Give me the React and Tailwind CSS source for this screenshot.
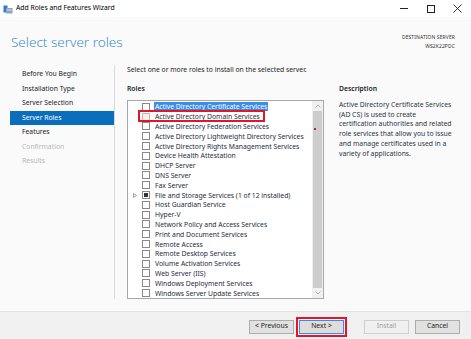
import React from 'react';

const navItems = [
    { label: 'Before You Begin' },
    { label: 'Installation Type' },
    { label: 'Server Selection' },
    { label: 'Server Roles', active: true },
    { label: 'Features' },
    { label: 'Confirmation', disabled: true },
    { label: 'Results', disabled: true },
];

const roles = [
    'Active Directory Certificate Services',
    'Active Directory Domain Services',
    'Active Directory Federation Services',
    'Active Directory Lightweight Directory Services',
    'Active Directory Rights Management Services',
    'Device Health Attestation',
    'DHCP Server',
    'DNS Server',
    'Fax Server',
    'File and Storage Services (1 of 12 installed)',
    'Host Guardian Service',
    'Hyper-V',
    'Network Policy and Access Services',
    'Print and Document Services',
    'Remote Access',
    'Remote Desktop Services',
    'Volume Activation Services',
    'Web Server (IIS)',
    'Windows Deployment Services',
    'Windows Server Update Services',
];

const descLines = [
    'Active Directory Certificate Services',
    '(AD CS) is used to create',
    'certification authorities and related',
    'role services that allow you to issue',
    'and manage certificates used in a',
    'variety of applications.',
];

const WizardIcon = () => (
    <svg width="10" height="9" viewBox="0 0 10 9">
        <rect x="0.5" y="0.5" width="4" height="7" fill="#2b7cd3" />
        <rect x="3" y="3" width="6.5" height="5.5" fill="#8aa4bd" />
        <rect x="4" y="4.5" width="4.5" height="1" fill="#dbe6f0" />
    </svg>
);

const Row = ({ label, index }) => {
    const selected = index === 0;
    const hovered = index === 1;
    const installed = index === 9;
    return (
        <div className="relative flex items-center h-[9.8px]">
            <div className="w-[14px] flex justify-center">
                {installed && (
                    <svg width="4" height="5" viewBox="0 0 4 5">
                        <path d="M0.5 0.5 L3.5 2.5 L0.5 4.5 Z" fill="none" stroke="#8a8a8a" strokeWidth="0.8" />
                    </svg>
                )}
            </div>
            <div
                className={`w-[8px] h-[8px] border flex items-center justify-center ${
                    hovered ? 'border-[#c9b3b3] bg-[#fbeeee]' : 'border-[#8a8a8a] bg-white'
                }`}
            >
                {installed && <div className="w-[4px] h-[4px] bg-[#333]" />}
            </div>
            <span
                className={`ml-[4px] px-[1px] leading-[9px] whitespace-nowrap ${
                    selected ? 'bg-[#3b8ee6] text-white' : 'text-[#1e2a3e]'
                }`}
            >
                {label}
            </span>
            {hovered && (
                <span className="absolute left-[10px] top-[-2px] w-[127px] h-[12px] border-2 border-[#e0162b]" />
            )}
        </div>
    );
};

const Button = ({ children, variant }) => {
    const styles = {
        default: 'bg-[#e1e1e1] border-[#adadad] text-[#222]',
        primary: 'bg-[#e0dcdc] border-[#3b8ee6] text-[#222] outline-2 outline-[#e0162b] outline-offset-[1px]',
        disabled: 'bg-[#f0f0f0] border-[#cfcfcf] text-[#a0a0a0]',
    };
    return (
        <div className={`w-[45px] h-[14px] border flex items-center justify-center text-[6.8px] ${styles[variant]}`}>
            {children}
        </div>
    );
};

export default function App() {
    return (
        <div
            className="w-[471px] h-[339px] flex flex-col bg-white overflow-hidden text-[6.8px] text-[#222]"
            style={{ fontFamily: '"Noto Sans", "Open Sans", sans-serif' }}
        >
            {/* Title bar */}
            <div className="h-[17px] flex items-center bg-white">
                <div className="ml-[3px] mt-[1px]">
                    <WizardIcon />
                </div>
                <span className="ml-[3px] text-[6.8px] text-black">Add Roles and Features Wizard</span>
                <div className="ml-auto flex items-center h-full">
                    <div className="w-[27px] flex justify-center">
                        <div className="w-[8px] h-[1px] bg-[#222]" />
                    </div>
                    <div className="w-[27px] flex justify-center">
                        <div className="w-[8px] h-[8px] border border-[#222]" />
                    </div>
                    <div className="w-[27px] flex justify-center">
                        <svg width="9" height="9" viewBox="0 0 9 9">
                            <path d="M0.5 0.5 L8.5 8.5 M8.5 0.5 L0.5 8.5" stroke="#222" strokeWidth="0.9" />
                        </svg>
                    </div>
                </div>
            </div>

            {/* Header */}
            <div className="h-[43px] bg-[#fafafa] flex items-start justify-between">
                <div className="ml-[11px] mt-[17px] text-[13.5px] font-light leading-[17px] text-[#3f8fcf]">
                    Select server roles
                </div>
                <div className="mr-[16px] mt-[16px] text-right text-[5px] leading-[9px] text-[#333] tracking-[0.1px]">
                    <div>DESTINATION SERVER</div>
                    <div>WS2K22PDC</div>
                </div>
            </div>

            {/* Body */}
            <div className="flex-1 flex bg-[#fafafa]">
                <div className="w-[115px] pl-[10px] pt-[5px] pb-[12px]">
                    <div className="h-full border-r border-[#dadada] pt-[2px]">
                        {navItems.map((item) => (
                            <div
                                key={item.label}
                                className={`h-[14.5px] pl-[12px] flex items-center ${
                                    item.active
                                        ? 'bg-[#0a6ebd] text-white'
                                        : item.disabled
                                        ? 'text-[#b8b8b8]'
                                        : 'text-[#222]'
                                }`}
                            >
                                {item.label}
                            </div>
                        ))}
                    </div>
                </div>

                <div className="flex-1 pl-[12px] pt-[5px]">
                    <div className="h-[10px] leading-[10px]">
                        Select one or more roles to install on the selected server.
                    </div>
                    <div className="flex mt-[9px]">
                        <div className="w-[197px]">
                            <div className="h-[10px] leading-[10px] font-semibold">Roles</div>
                            <div className="mt-[6px] h-[199px] border border-[#a8a8a8] bg-white flex">
                                <div className="flex-1 pt-[1px]">
                                    {roles.map((label, i) => (
                                        <Row key={label} label={label} index={i} />
                                    ))}
                                </div>
                                <div className="relative w-[11px] bg-[#f0f0f0] flex flex-col items-center">
                                    <div className="h-[10px] flex items-center justify-center">
                                        <svg width="6" height="4" viewBox="0 0 6 4">
                                            <path d="M0.5 3.5 L3 1 L5.5 3.5" fill="none" stroke="#a0a0a0" strokeWidth="0.8" />
                                        </svg>
                                    </div>
                                    <div className="flex-1 w-[9px] bg-[#cdcdcd]" />
                                    <div className="h-[10px] flex items-center justify-center">
                                        <svg width="6" height="4" viewBox="0 0 6 4">
                                            <path d="M0.5 0.5 L3 3 L5.5 0.5" fill="none" stroke="#a0a0a0" strokeWidth="0.8" />
                                        </svg>
                                    </div>
                                    <span className="absolute left-[2px] top-[27px] w-[2px] h-[2px] bg-[#e0162b]" />
                                </div>
                            </div>
                        </div>
                        <div className="ml-[15px]">
                            <div className="h-[10px] leading-[10px] font-semibold">Description</div>
                            <div className="mt-[6px] leading-[9.7px] text-[#2a3448]">
                                {descLines.map((line) => (
                                    <div key={line} className="whitespace-nowrap">
                                        {line}
                                    </div>
                                ))}
                            </div>
                        </div>
                    </div>
                </div>
            </div>

            {/* Footer */}
            <div className="h-[28px] bg-[#f0f0f0] border-t border-[#e2e2e2] flex items-center justify-end pr-[11px] pt-[2px]">
                <Button variant="default">&lt; Previous</Button>
                <div className="ml-[5px]">
                    <Button variant="primary">Next &gt;</Button>
                </div>
                <div className="ml-[20px]">
                    <Button variant="disabled">Install</Button>
                </div>
                <div className="ml-[6px]">
                    <Button variant="default">Cancel</Button>
                </div>
            </div>
        </div>
    );
}
